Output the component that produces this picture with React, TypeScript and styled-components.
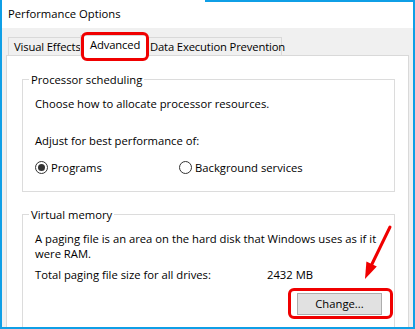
import React from "react";
import styled, { createGlobalStyle } from "styled-components";

const GlobalStyle = createGlobalStyle`
  html, body { margin: 0; padding: 0; background: #ffffff; }
  body { font-family: "Open Sans", "Noto Sans", sans-serif; }
  * { box-sizing: border-box; }
`;

const BLUE = "#0f9fe6";
const RED = "#f00000";

const Window = styled.div`
  position: relative;
  width: 415px;
  height: 329px;
  display: flex;
  flex-direction: column;
  border-left: 2px solid ${BLUE};
  border-right: 2px solid ${BLUE};
  border-bottom: 2px solid ${BLUE};
  font-family: "Open Sans", "Noto Sans", sans-serif;
  font-size: 11.25px;
  line-height: 15px;
  color: #000;
  overflow: hidden;
`;

const TitleBar = styled.div`
  position: relative;
  height: 28px;
  flex: none;
  display: flex;
  align-items: center;
  padding: 0 0 2px 6px;
  background: #ffffff;
  &::before {
    content: "";
    position: absolute;
    top: 0;
    left: 203px;
    right: 0;
    height: 2px;
    background: ${BLUE};
  }
`;

const Body = styled.div`
  flex: 1;
  min-height: 0;
  display: flex;
  flex-direction: column;
  padding: 7px 4px 0 4px;
  background: #f0f0f0;
`;

const TabRow = styled.div`
  display: flex;
  align-items: flex-end;
  height: 20px;
  padding-left: 2px;
  position: relative;
  z-index: 1;
`;

const Tab = styled.div<{ $w: number; $pad: number; $active?: boolean }>`
  width: ${(p) => p.$w}px;
  height: ${(p) => (p.$active ? 21 : 18)}px;
  margin: ${(p) => (p.$active ? "0 -2px -1px -2px" : "0")};
  padding: 0 0 ${(p) => (p.$active ? 3 : 1)}px ${(p) => p.$pad}px;
  display: flex;
  align-items: center;
  justify-content: flex-start;
  white-space: nowrap;
  letter-spacing: -0.15px;
  background: ${(p) => (p.$active ? "#ffffff" : "#f0f0f0")};
  border: 1px solid #d9d9d9;
  border-bottom: none;
  position: relative;
  z-index: ${(p) => (p.$active ? 2 : 0)};
`;

const Panel = styled.div`
  flex: 1;
  min-height: 0;
  display: flex;
  flex-direction: column;
  background: #ffffff;
  border: 1px solid #d9d9d9;
  border-bottom: none;
  padding: 16px 13px 0 15px;
  overflow: hidden;
`;

const GroupBox = styled.fieldset<{ $grow?: boolean; $gap?: number }>`
  margin: ${(p) => p.$gap ?? 0}px 0 0 0;
  padding: 9px 12px ${(p) => (p.$grow ? 40 : 16)}px 12px;
  min-width: 0;
  border: 1px solid #dcdcdc;
  display: flex;
  flex-direction: column;
  flex: ${(p) => (p.$grow ? "1 0 auto" : "none")};
`;

const Legend = styled.legend`
  margin-left: -6px;
  padding: 0 2px;
  line-height: 15px;
`;

const Line = styled.div<{ $gap?: number }>`
  margin-top: ${(p) => p.$gap ?? 0}px;
  white-space: nowrap;
`;

const RadioRow = styled.div`
  display: grid;
  grid-template-columns: 144px auto;
  margin-top: 12px;
`;

const RadioOption = styled.label`
  display: flex;
  align-items: center;
  gap: 3px;
  height: 15px;
`;

const RadioCircle = styled.span<{ $checked?: boolean }>`
  width: 13px;
  height: 13px;
  border-radius: 50%;
  border: 1px solid #333333;
  background: #ffffff;
  display: flex;
  align-items: center;
  justify-content: center;
  &::after {
    content: "";
    width: 7px;
    height: 7px;
    border-radius: 50%;
    background: ${(p) => (p.$checked ? "#333333" : "transparent")};
  }
`;

const InfoRow = styled.div`
  display: grid;
  grid-template-columns: 232px auto;
  margin-top: 6px;
  white-space: nowrap;
`;

const ButtonRow = styled.div`
  display: flex;
  justify-content: flex-end;
  margin-top: 11px;
`;

const Button = styled.button`
  width: 85px;
  height: 22px;
  padding: 0 0 1px 0;
  background: #e1e1e1;
  border: 1px solid #adadad;
  font: inherit;
  color: #000;
`;

const Highlight = styled.div<{ $x: number; $y: number; $w: number; $h: number }>`
  position: absolute;
  left: ${(p) => p.$x}px;
  top: ${(p) => p.$y}px;
  width: ${(p) => p.$w}px;
  height: ${(p) => p.$h}px;
  border: 3px solid ${RED};
  border-radius: 6px;
  pointer-events: none;
  z-index: 5;
`;

const Arrow = styled.svg`
  position: absolute;
  left: 0;
  top: 0;
  width: 415px;
  height: 329px;
  pointer-events: none;
  z-index: 5;
`;

export default function App() {
  return (
    <>
      <GlobalStyle />
      <Window>
        <TitleBar>Performance Options</TitleBar>
        <Body>
          <TabRow>
            <Tab $w={74} $pad={5}>
              Visual Effects
            </Tab>
            <Tab $w={67} $pad={9} $active>
              Advanced
            </Tab>
            <Tab $w={137} $pad={4}>
              Data Execution Prevention
            </Tab>
          </TabRow>
          <Panel>
            <GroupBox>
              <Legend>Processor scheduling</Legend>
              <Line>Choose how to allocate processor resources.</Line>
              <Line $gap={22}>Adjust for best performance of:</Line>
              <RadioRow>
                <RadioOption>
                  <RadioCircle $checked />
                  Programs
                </RadioOption>
                <RadioOption>
                  <RadioCircle />
                  Background services
                </RadioOption>
              </RadioRow>
            </GroupBox>
            <GroupBox $grow $gap={15}>
              <Legend>Virtual memory</Legend>
              <Line>
                A paging file is an area on the hard disk that Windows uses as if it
                <br />
                were RAM.
              </Line>
              <InfoRow>
                <span>Total paging file size for all drives:</span>
                <span>2432 MB</span>
              </InfoRow>
              <ButtonRow>
                <Button>Change...</Button>
              </ButtonRow>
            </GroupBox>
          </Panel>
        </Body>
        <Highlight $x={79} $y={32} $w={68} $h={29} />
        <Highlight $x={286} $y={288} $w={105} $h={31} />
        <Arrow viewBox="0 0 415 329">
          <line x1="388" y1="227" x2="369.5" y2="265" stroke={RED} strokeWidth="3" strokeLinecap="round" />
          <polygon points="363,279 374.8,266.5 364.4,261.5" fill={RED} />
        </Arrow>
      </Window>
    </>
  );
}
